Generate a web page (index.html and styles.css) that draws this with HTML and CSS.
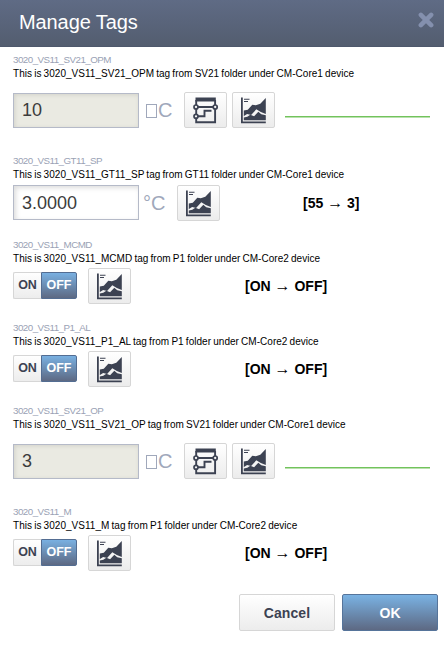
FILE: index.html
```html
<!DOCTYPE html>
<html lang="en">
<head>
<meta charset="utf-8">
<title>Manage Tags</title>
<link rel="stylesheet" href="styles.css">
</head>
<body>
<svg class="defs" width="0" height="0" aria-hidden="true">
  <symbol id="chart" viewBox="0 0 27 28">
    <path d="M1 1.500h1.800v24h23v1.800H1z"/>
    <path d="M4 2.700h5.500v1H4zM4 5h4v1H4z"/>
    <path d="M3.800 14.500l4-.8 4.500-5 3.500.5 4.500-1.500 5.500-5.700V18l-5-2-4.500-2.700-5.200 5.700-4-1-3.500 2.200H3.800z"/>
    <path d="M3.800 24.300v-2.800l3.500-.8 3-2 3.800 1.500 4.200-4.500 3 2.500 4.500 1v5.100z"/>
  </symbol>
  <symbol id="block" viewBox="0 0 27 28">
    <path d="M3.500 1.500h20.300v4H3.500z"/>
    <g fill="none" stroke="#3c4252" stroke-width="1.900">
      <path d="M4.200 4v22.300h18.900V4"/>
      <path d="M4 11h19M4 20.300h8.500v-5.600h7"/>
      <g fill="#f5f5f5" stroke-width="1.700"><circle cx="4" cy="11" r="2"/><circle cx="23.200" cy="11" r="2"/><circle cx="4" cy="20.300" r="2"/></g>
    </g>
  </symbol>
</svg>
<div class="dialog">
  <header class="header">
    <h1>Manage Tags</h1>
    <svg class="close" viewBox="0 0 14 14"><path d="M2.500 2.500l9 9M11.500 2.500l-9 9"/></svg>
  </header>
  <main>
    <section class="tag tall">
      <div class="name">3020_VS11_SV21_OPM</div>
      <div class="desc">This is 3020_VS11_SV21_OPM tag from SV21 folder under CM-Core1 device</div>
      <div class="controls">
        <input class="field" value="10" disabled>
        <span class="unit wide"><i class="box"></i>C</span>
        <button class="btn icon"><svg><use href="#block"/></svg></button>
        <button class="btn icon"><svg><use href="#chart"/></svg></button>
        <span class="trend"></span>
      </div>
    </section>
    <section class="tag second">
      <div class="name">3020_VS11_GT11_SP</div>
      <div class="desc">This is 3020_VS11_GT11_SP tag from GT11 folder under CM-Core1 device</div>
      <div class="controls">
        <input class="field" value="3.0000">
        <span class="unit">°C</span>
        <button class="btn icon"><svg><use href="#chart"/></svg></button>
        <span class="change value">[55 <span class="arrow">→</span> 3]</span>
      </div>
    </section>
    <section class="tag">
      <div class="name">3020_VS11_MCMD</div>
      <div class="desc">This is 3020_VS11_MCMD tag from P1 folder under CM-Core2 device</div>
      <div class="controls">
        <div class="switch"><span>ON</span><span class="active">OFF</span></div>
        <button class="btn icon"><svg><use href="#chart"/></svg></button>
        <span class="change">[ON <span class="arrow">→</span> OFF]</span>
      </div>
    </section>
    <section class="tag">
      <div class="name">3020_VS11_P1_AL</div>
      <div class="desc">This is 3020_VS11_P1_AL tag from P1 folder under CM-Core2 device</div>
      <div class="controls">
        <div class="switch"><span>ON</span><span class="active">OFF</span></div>
        <button class="btn icon"><svg><use href="#chart"/></svg></button>
        <span class="change">[ON <span class="arrow">→</span> OFF]</span>
      </div>
    </section>
    <section class="tag tall">
      <div class="name">3020_VS11_SV21_OP</div>
      <div class="desc">This is 3020_VS11_SV21_OP tag from SV21 folder under CM-Core1 device</div>
      <div class="controls">
        <input class="field" value="3" disabled>
        <span class="unit wide"><i class="box"></i>C</span>
        <button class="btn icon"><svg><use href="#block"/></svg></button>
        <button class="btn icon"><svg><use href="#chart"/></svg></button>
        <span class="trend"></span>
      </div>
    </section>
    <section class="tag">
      <div class="name">3020_VS11_M</div>
      <div class="desc">This is 3020_VS11_M tag from P1 folder under CM-Core2 device</div>
      <div class="controls">
        <div class="switch"><span>ON</span><span class="active">OFF</span></div>
        <button class="btn icon"><svg><use href="#chart"/></svg></button>
        <span class="change">[ON <span class="arrow">→</span> OFF]</span>
      </div>
    </section>
  </main>
  <footer>
    <button class="btn action">Cancel</button>
    <button class="btn action primary">OK</button>
  </footer>
</div>
</body>
</html>
```
FILE: styles.css
```css
* { box-sizing: border-box; }
body {
  margin: 0;
  background: #fff;
  font-family: "Liberation Sans", Arial, sans-serif;
  overflow: hidden;
}
.defs { display: block; height: 0; }
.dialog { width: 444px; height: 646px; }
.header {
  height: 47px;
  padding: 0 10px 0 19px;
  display: flex;
  align-items: center;
  justify-content: space-between;
  background: linear-gradient(#5f6b85, #535d6f);
  border-bottom: 1px solid #4e586c;
}
h1 {
  margin: 0;
  padding-bottom: 2px;
  color: #fff;
  font-size: 20px;
  font-weight: 400;
  line-height: 24px;
  letter-spacing: -0.1px;
}
.close {
  width: 16px;
  height: 16px;
  margin-bottom: 6px;
  stroke: #8490ae;
  stroke-width: 4;
  stroke-linecap: round;
}
main { padding: 6px 0 0 13px; }
.tag { height: 83px; }
.tag.tall { height: 101px; }
.tag.second { height: 84px; }
.name {
  height: 14px;
  color: #9aa2b5;
  font-size: 9.8px;
  line-height: 14px;
  letter-spacing: -0.54px;
}
.desc {
  height: 14px;
  color: #000;
  font-size: 10px;
  line-height: 14px;
  letter-spacing: 0.03px;
  word-spacing: -0.65px;
  white-space: nowrap;
}
.controls {
  height: 36px;
  margin-top: 2px;
  display: flex;
  align-items: flex-start;
}
.second .controls { margin-top: 3px; }
.tall .controls { margin-top: 11px; }
.field {
  width: 126px;
  height: 35px;
  margin: 0;
  padding: 1px 8px 0;
  border: 1px solid #b5bac8;
  border-radius: 0;
  background: #fff;
  box-shadow: inset 2px 2px 5px #ddd;
  color: #3c3c3c;
  font: 18px "Liberation Sans", Arial, sans-serif;
}
.tall .field { margin-top: 1px; }
.tall .field:disabled { padding-top: 0; padding-bottom: 1px; }
.field:disabled { background: #eaeae2; box-shadow: inset 1px 1px 4px #d2d2ca; }
.unit {
  width: 38px;
  padding-left: 4px;
  color: #a0a8bb;
  font-size: 20px;
  line-height: 36px;
}
.unit.wide {
  width: 45px;
  padding-left: 7px;
  display: flex;
  align-items: center;
}
.box {
  width: 11px;
  height: 14px;
  margin: 2px 1px 0 0;
  border: 1px solid #a0a8bb;
}
.btn {
  padding: 0;
  border: 1px solid #d6d6d6;
  border-radius: 2px;
  background: linear-gradient(#fff, #ececec);
  color: #3c4252;
  font: bold 14px "Liberation Sans", Arial, sans-serif;
}
.icon {
  width: 43px;
  height: 36px;
  flex: none;
  display: flex;
  align-items: center;
  justify-content: center;
}
.icon + .icon { margin-left: 5px; }
.icon svg { width: 27px; height: 28px; fill: #3c4252; }
.trend {
  width: 145px;
  height: 2px;
  margin: 24px 0 0 10px;
  background: #72c35c;
  border-bottom: 1px solid #b9e1ae;
}
.change {
  margin-left: 114px;
  color: #000;
  font-size: 14px;
  font-weight: 700;
  line-height: 37px;
  white-space: nowrap;
}
.change.value { margin-left: 83px; }
.arrow { font: 400 16px/1 "Liberation Sans", sans-serif; }
.switch {
  width: 64px;
  height: 27px;
  margin: 4px 11px 0 0;
  display: flex;
  border-radius: 2px;
  background: linear-gradient(#fff, #ececec);
  color: #3c4252;
  font-size: 12.5px;
  font-weight: 700;
  line-height: 25px;
  text-align: center;
}
.switch span { width: 28px; border: 1px solid #d6d6d6; border-right: 0; border-radius: 2px 0 0 2px; }
.switch .active {
  width: 36px;
  border: 1px solid #536d92;
  border-radius: 0 2px 2px 0;
  background: linear-gradient(#79b0e1, #5d6983);
  color: #fff;
}
footer { padding: 6px 6px 0 0; display: flex; justify-content: flex-end; gap: 7px; }
.action { width: 96px; height: 37px; letter-spacing: 0.1px; }
.primary {
  border-color: #56749a;
  background: linear-gradient(#7ab2e3, #5d6983);
  color: #fff;
}
```
